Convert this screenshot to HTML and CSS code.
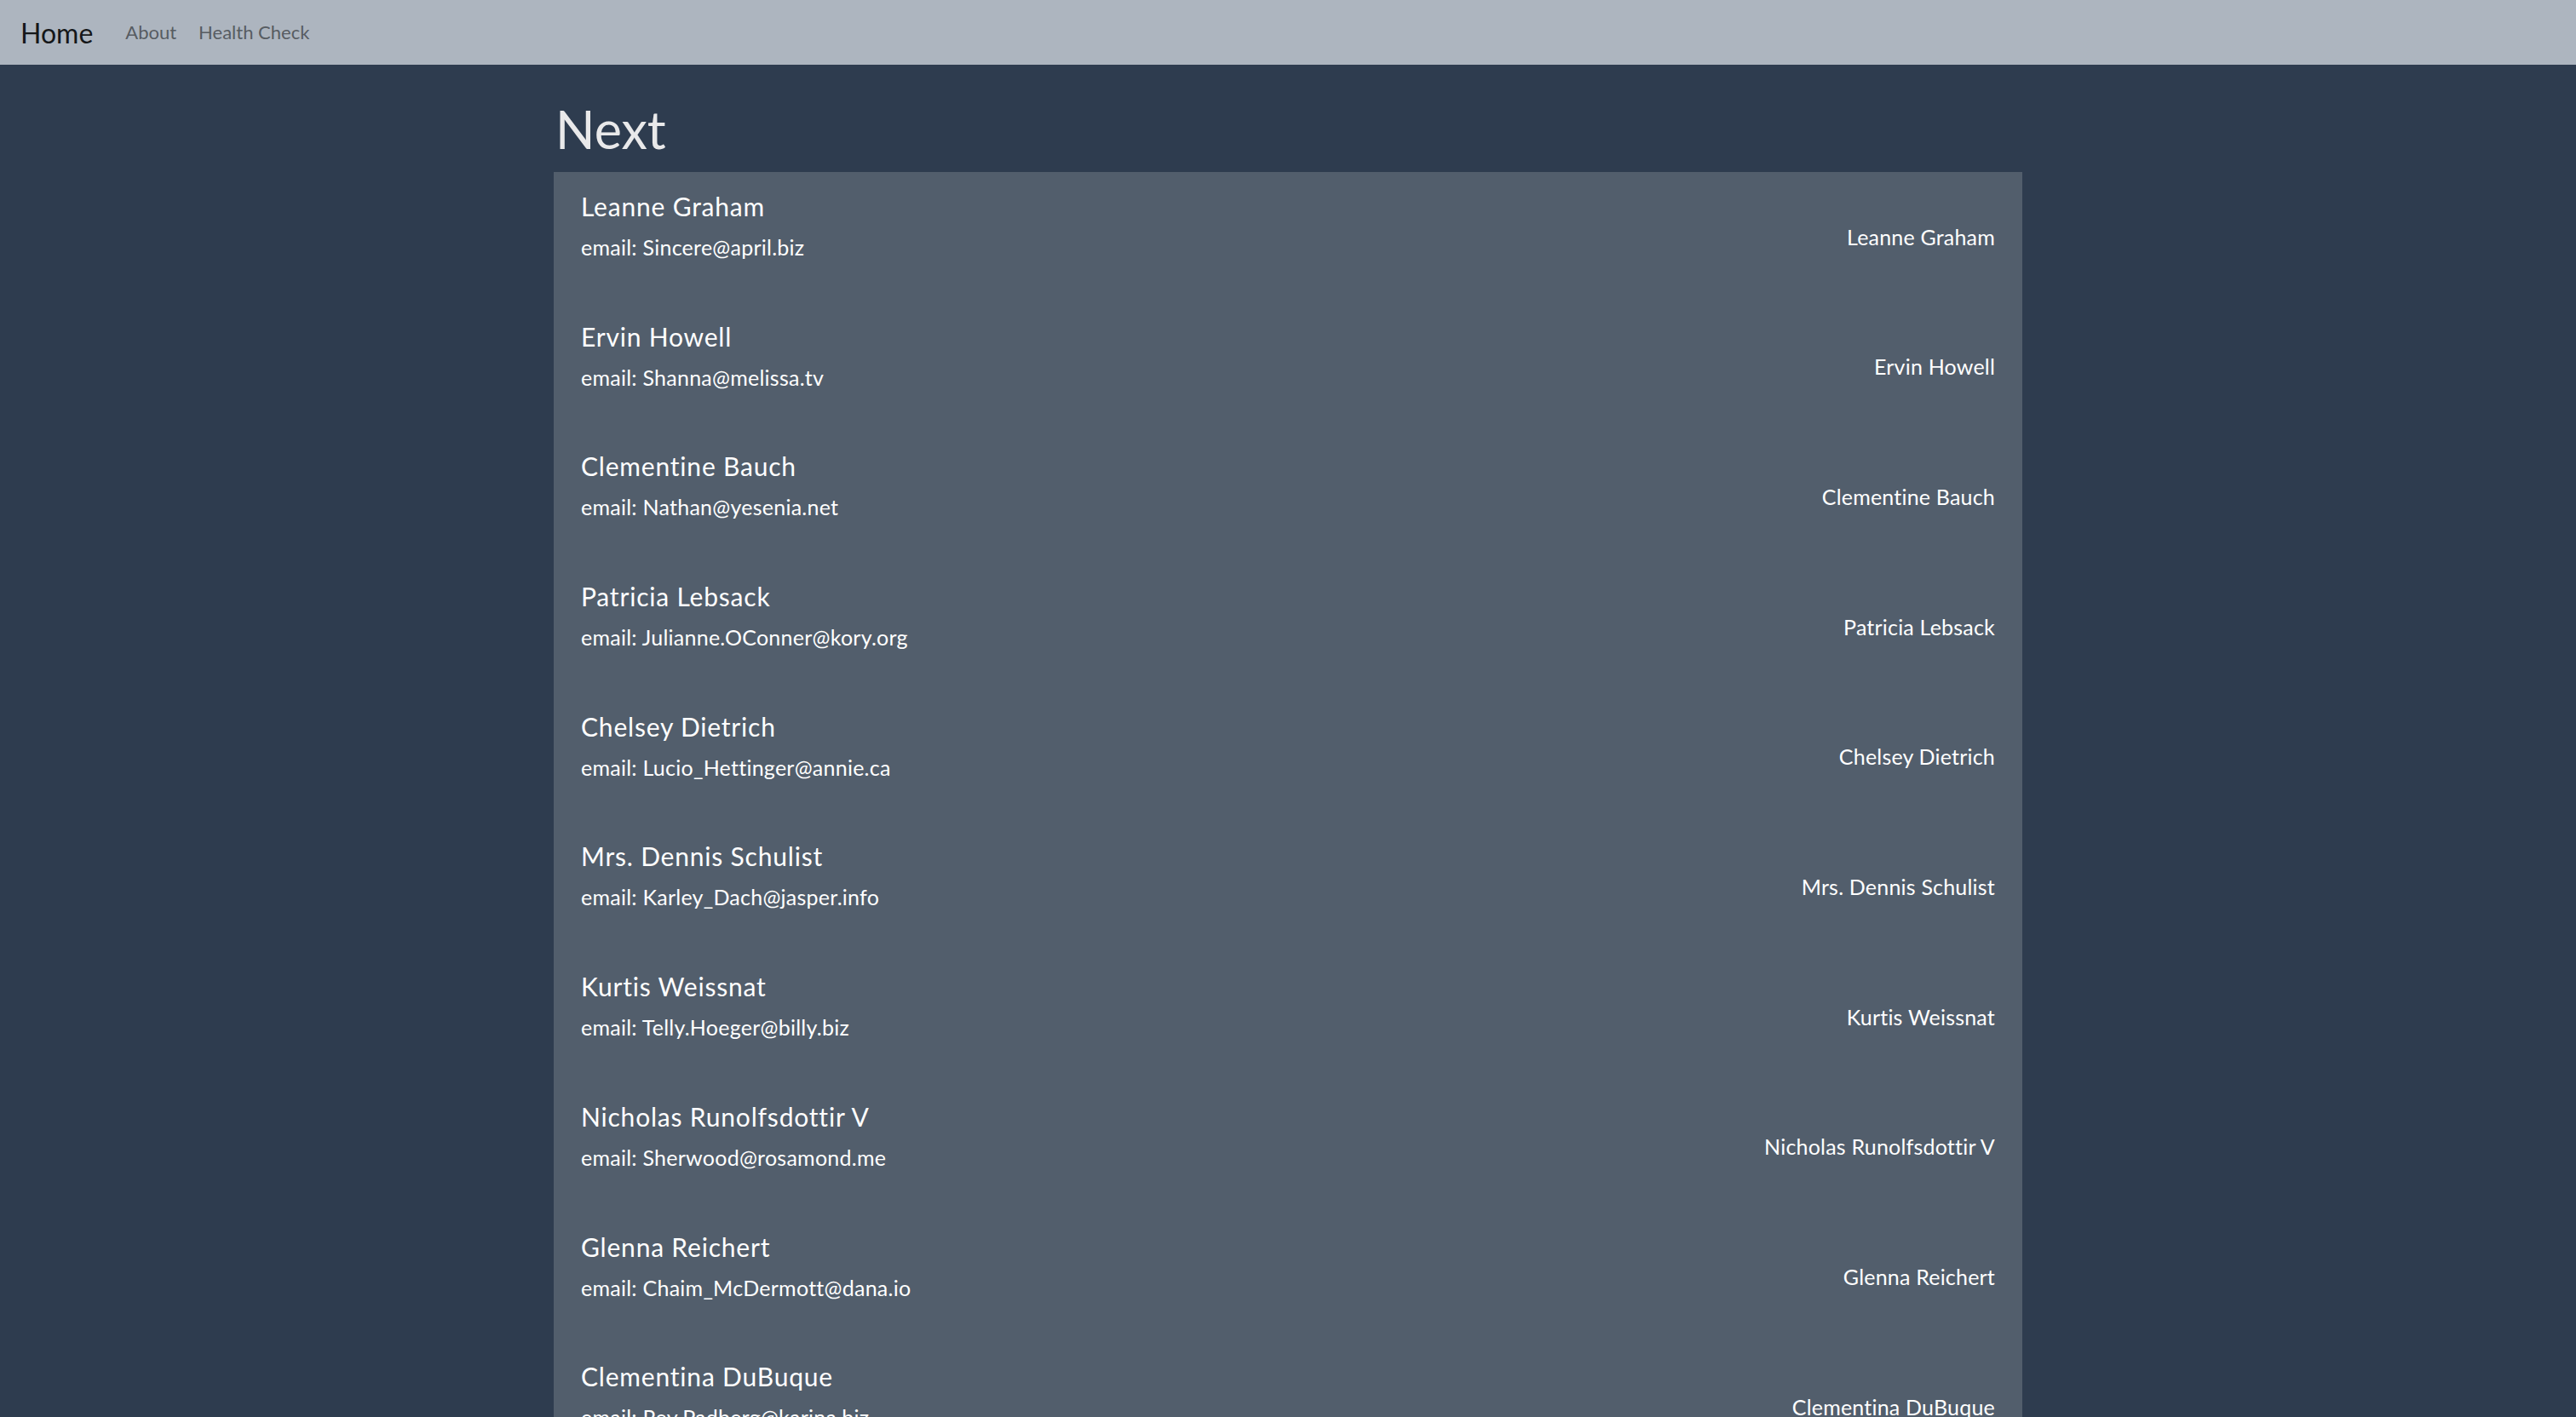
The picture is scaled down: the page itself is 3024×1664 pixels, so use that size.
FILE: index.html
```html
<!DOCTYPE html>
<html lang="en">
<head>
<meta charset="utf-8">
<title>Next</title>
<link rel="stylesheet" href="styles.css">
</head>
<body>
<nav class="navbar">
  <a class="brand" href="#">Home</a>
  <a class="nav-link" href="#">About</a>
  <a class="nav-link" href="#">Health Check</a>
</nav>
<main class="container">
  <h1 class="title">Next</h1>
  <ul class="list">
    <li class="item"><div class="info"><h5 class="name">Leanne Graham</h5><p class="email">email: Sincere@april.biz</p></div><span class="side">Leanne Graham</span></li>
    <li class="item"><div class="info"><h5 class="name">Ervin Howell</h5><p class="email">email: Shanna@melissa.tv</p></div><span class="side">Ervin Howell</span></li>
    <li class="item"><div class="info"><h5 class="name">Clementine Bauch</h5><p class="email">email: Nathan@yesenia.net</p></div><span class="side">Clementine Bauch</span></li>
    <li class="item"><div class="info"><h5 class="name">Patricia Lebsack</h5><p class="email">email: Julianne.OConner@kory.org</p></div><span class="side">Patricia Lebsack</span></li>
    <li class="item"><div class="info"><h5 class="name">Chelsey Dietrich</h5><p class="email">email: Lucio_Hettinger@annie.ca</p></div><span class="side">Chelsey Dietrich</span></li>
    <li class="item"><div class="info"><h5 class="name">Mrs. Dennis Schulist</h5><p class="email">email: Karley_Dach@jasper.info</p></div><span class="side">Mrs. Dennis Schulist</span></li>
    <li class="item"><div class="info"><h5 class="name">Kurtis Weissnat</h5><p class="email">email: Telly.Hoeger@billy.biz</p></div><span class="side">Kurtis Weissnat</span></li>
    <li class="item"><div class="info"><h5 class="name">Nicholas Runolfsdottir V</h5><p class="email">email: Sherwood@rosamond.me</p></div><span class="side">Nicholas Runolfsdottir V</span></li>
    <li class="item"><div class="info"><h5 class="name">Glenna Reichert</h5><p class="email">email: Chaim_McDermott@dana.io</p></div><span class="side">Glenna Reichert</span></li>
    <li class="item"><div class="info"><h5 class="name">Clementina DuBuque</h5><p class="email">email: Rey.Padberg@karina.biz</p></div><span class="side">Clementina DuBuque</span></li>
  </ul>
</main>
</body>
</html>
```
FILE: styles.css
```css
* { box-sizing: border-box; }
html, body { margin: 0; padding: 0; }
body {
  background: #2e3c4f;
  font-family: Lato, "Open Sans", sans-serif;
  color: #fff;
}
.navbar {
  height: 76px;
  background: #adb5bf;
  display: flex;
  align-items: center;
  padding: 0 24px;
}
.brand {
  font-size: 32px;
  color: #151719;
  text-decoration: none;
  margin-right: 38px;
  line-height: 1;
  padding-top: 2px;
}
.nav-link {
  font-size: 22px;
  color: #575c62;
  text-decoration: none;
  margin-right: 26px;
  line-height: 1;
}
.container {
  width: 1724px;
  margin: 0 auto;
}
.title {
  font-size: 61px;
  font-weight: 400;
  line-height: 72px;
  color: #e9e9ea;
  margin: 40px 0 14px 2px;
}
.list {
  list-style: none;
  margin: 0;
  padding: 0;
  background: #525e6c;
}
.item {
  display: flex;
  justify-content: space-between;
  align-items: center;
  padding: 22px 32px;
  height: 152.7px;
}
.info { align-self: flex-start; }
.name {
  font-size: 30px;
  font-weight: 400;
  line-height: 36px;
  letter-spacing: 0.8px;
  margin: 0 0 12px;
}
.email {
  font-size: 25px;
  line-height: 37px;
  letter-spacing: 0.25px;
  margin: 0;
}
.side {
  font-size: 25px;
  line-height: 1.5;
  letter-spacing: 0.2px;
}
```
